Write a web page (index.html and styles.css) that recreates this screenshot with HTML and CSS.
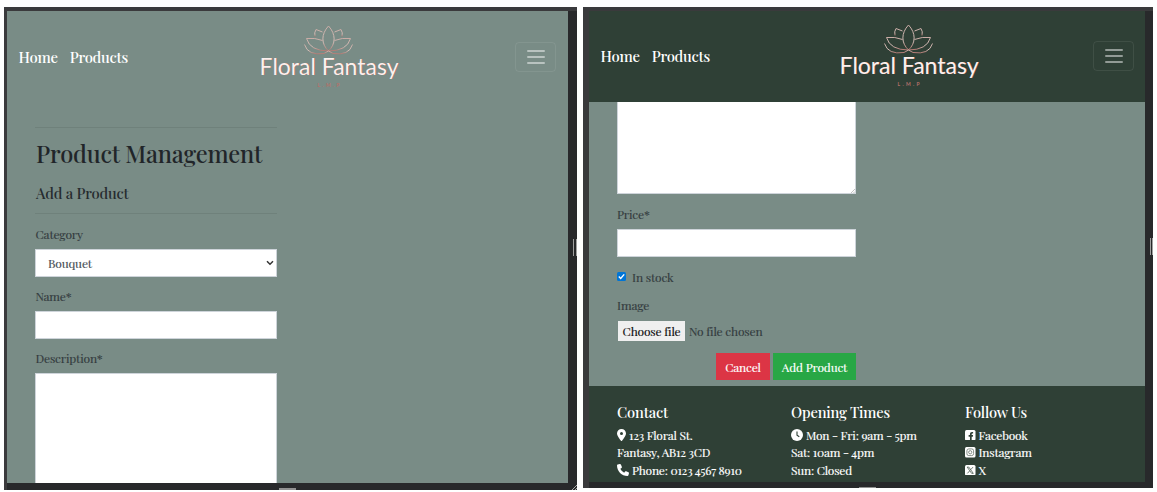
FILE: index.html
```
<!DOCTYPE html>
<html lang="en">
<head>
<meta charset="utf-8">
<title>Floral Fantasy - Product Management</title>
<link rel="stylesheet" href="styles.css">
</head>
<body>
<svg class="defs" aria-hidden="true">
  <defs>
    <linearGradient id="rose" x1="0" y1="0" x2="0" y2="1">
      <stop offset="0" stop-color="#c9aca6"/><stop offset=".65" stop-color="#d2bcb6"/><stop offset="1" stop-color="#b0756e"/>
    </linearGradient>
    <symbol id="logo" viewBox="0 0 144 70">
      <g fill="none" stroke="url(#rose)" stroke-width="1" stroke-linejoin="round">
        <path d="M70.500 3C63 11 63 21 70.500 28C78 21 78 11 70.500 3Z"/>
        <path d="M64.500 9L58 6.500Q56 9.500 57 13.500M76.500 9L83 6.500Q85 9.500 84 13.500"/>
        <path d="M64.500 17.500Q57 14.500 48.500 15.500Q52 28 70.500 28Q89 28 92.500 15.500Q84 14.500 76.500 17.500"/>
        <path d="M46.500 21.500Q50 33 66 30.500L70.500 28L75 30.500Q91 33 94.500 21.500"/>
      </g>
      <text class="logo-shadow" x="2" y="52.400" textLength="139" lengthAdjust="spacingAndGlyphs">Floral Fantasy</text>
      <text class="logo-name" x="1.600" y="52" textLength="139" lengthAdjust="spacingAndGlyphs">Floral Fantasy</text>
      <text class="logo-sub" x="59.500" y="64" textLength="22">L.M.P</text>
    </symbol>
  </defs>
</svg>

<section class="window window-left">
  <div class="screen">
    <header class="nav">
      <nav class="links"><a>Home</a><a>Products</a></nav>
      <svg class="logo"><use href="#logo"/></svg>
      <button class="toggler"><i></i><i></i><i></i></button>
    </header>
    <main class="form form-top">
      <hr>
      <h1>Product Management</h1>
      <h2>Add a Product</h2>
      <hr class="second">
      <label>Category</label>
      <div class="field select"><span>Bouquet</span>
        <svg width="8" height="6" viewBox="0 0 8 6"><path d="M1 1.300L4 4.300L7 1.300" fill="none" stroke="#333" stroke-width="1.500"/></svg>
      </div>
      <label>Name*</label>
      <div class="field"></div>
      <label>Description*</label>
      <div class="field area"></div>
    </main>
  </div>
  <span class="grip-v"></span>
  <span class="grip-h"></span>
  <svg class="corner" width="5" height="5" viewBox="0 0 5 5"><path d="M0 5L5 0M3 5L5 3" stroke="#aaa"/></svg>
</section>

<section class="window window-right">
  <div class="screen">
    <header class="nav dark">
      <nav class="links"><a>Home</a><a>Products</a></nav>
      <svg class="logo"><use href="#logo"/></svg>
      <button class="toggler"><i></i><i></i><i></i></button>
    </header>
    <main class="form form-bottom">
      <div class="area-end"><svg width="4" height="4" viewBox="0 0 4 4"><path d="M0 4L4 0M2.500 4L4 2.500" stroke="#999" stroke-width=".6"/></svg></div>
      <label>Price*</label>
      <div class="field"></div>
      <div class="check">
        <svg width="9" height="9" viewBox="0 0 9 9"><rect width="9" height="9" rx="1.500" fill="#0075d6"/><path d="M1.800 4.600L3.700 6.500L7.200 2.400" fill="none" stroke="#fff" stroke-width="1.400"/></svg>
        <span>In stock</span>
      </div>
      <label class="image-label">Image</label>
      <div class="file"><span class="choose">Choose file</span><span>No file chosen</span></div>
      <div class="actions"><a class="btn cancel">Cancel</a><a class="btn add">Add Product</a></div>
    </main>
    <footer>
      <div class="col">
        <h3>Contact</h3>
        <p><svg width="9" height="12" viewBox="0 0 384 512"><path fill="#fff" d="M215.700 499.200C267 435 384 279.400 384 192C384 86 298 0 192 0S0 86 0 192c0 87.400 117 243 168.300 307.200 12.300 15.300 35.100 15.300 47.400 0zM192 128a64 64 0 1 1 0 128 64 64 0 1 1 0-128z"/></svg><span>123 Floral St.</span></p>
        <p><span>Fantasy, AB12 3CD</span></p>
        <p><svg width="12" height="12" viewBox="0 0 512 512"><path fill="#fff" d="M164.900 24.600c-7.700-18.600-28-28.500-47.400-23.200l-88 24C12.100 30.200 0 46 0 64c0 247.400 200.600 448 448 448 18 0 33.800-12.100 38.600-29.500l24-88c5.300-19.400-4.600-39.700-23.200-47.400l-96-40c-16.300-6.800-35.200-2.100-46.300 11.600L304.700 368C234.300 334.700 177.300 277.700 144 207.300L193.300 167c13.700-11.200 18.400-30 11.600-46.300l-40-96z"/></svg><span>Phone: 0123 4567 8910</span></p>
      </div>
      <div class="col">
        <h3>Opening Times</h3>
        <p><svg width="12" height="12" viewBox="0 0 12 12"><circle cx="6" cy="6" r="6" fill="#fff"/><path d="M6 2.500V6.200L8.300 7.700" fill="none" stroke="#2f4036" stroke-width="1.100"/></svg><span>Mon - Fri: 9am - 5pm</span></p>
        <p><span>Sat: 10am - 4pm</span></p>
        <p><span>Sun: Closed</span></p>
      </div>
      <div class="col">
        <h3>Follow Us</h3>
        <p><svg width="10.500" height="10.500" viewBox="0 0 11 11"><rect width="11" height="11" rx="1.600" fill="#fff"/><path d="M5.200 11V7H3.800V5.200H5.200V4.200C5.200 2.700 6 2 7.300 2H8.500V3.600H7.800C7.200 3.600 7 3.900 7 4.400V5.200H8.500L8.200 7H7V11Z" fill="#2f4036"/></svg><span>Facebook</span></p>
        <p><svg width="10.500" height="10.500" viewBox="0 0 11 11"><rect width="11" height="11" rx="1.600" fill="#fff"/><g fill="none" stroke="#627068" stroke-width=".8"><rect x="2" y="2" width="7" height="7" rx="2"/><circle cx="5.500" cy="5.500" r="1.700"/></g></svg><span>Instagram</span></p>
        <p><svg width="10.500" height="10.500" viewBox="0 0 11 11"><rect width="11" height="11" rx="1.600" fill="#fff"/><path d="M2.300 2.200H4L8.700 8.800H7ZM8.400 2.200L6 4.900M5 6L2.500 8.800" fill="none" stroke="#46554c" stroke-width=".8"/></svg><span>X</span></p>
      </div>
    </footer>
  </div>
  <span class="grip-v"></span>
  <span class="grip-h"></span>
</section>
</body>
</html>
```
FILE: styles.css
```
* { box-sizing: border-box; }
body {
  margin: 0;
  width: 1157px;
  height: 492px;
  padding: 7px 4px 0;
  display: flex;
  align-items: flex-start;
  gap: 6px;
  overflow: hidden;
  background: #fff;
  color: #343c40;
  font: 12px/18px "Playfair Display", "Liberation Serif", serif;
  letter-spacing: -.17px;
  -webkit-text-stroke: .15px currentColor;
}
.defs { position: absolute; width: 0; height: 0; }
h1, h2, h3, p, hr { margin: 0; }

.window {
  position: relative;
  flex: none;
  overflow: hidden;
  background: #28292b;
  border-top: 4px solid #3a3a3c;
}
.window-left { width: 573px; height: 483px; border-left: 3px solid #3a3a3c; }
.window-right { width: 570px; height: 481px; border-left: 6px solid #3a3a3c; }
.screen { overflow: hidden; background: #798c86; }
.window-left .screen { width: 561px; height: 472px; }
.window-right .screen { width: 556px; height: 471px; }

.grip-v { position: absolute; top: 228px; right: 0; width: 4px; height: 17px; border: solid #a0a0a0; border-width: 0 1px; }
.window-right .grip-v { top: 227px; right: 0; width: 3px; }
.grip-h { position: absolute; bottom: 0; left: 272px; width: 17px; height: 2px; background: #929292; }
.window-right .grip-h { left: 270px; height: 1px; }
.corner { position: absolute; right: 0; bottom: 0; }

.nav {
  height: 91px;
  padding: 0 12px 0 11.500px;
  display: grid;
  grid-template-columns: 239px 144px 1fr;
  align-items: center;
}
.dark { background: #2f4036; grid-template-columns: 237px 144px 1fr; padding-right: 11px; }
.links { display: flex; gap: 12px; color: #fff; font-size: 14.9px; line-height: 20px; font-weight: 500; letter-spacing: -.27px; -webkit-text-stroke: 0; }
.dark .links { margin-top: -1px; }
.logo { width: 144px; height: 70px; margin-top: 3px; -webkit-text-stroke: 0; letter-spacing: 0; }
.window-right .logo { margin-top: 1px; }
.logo-name, .logo-shadow { font: 22.5px Lato, sans-serif; fill: #faf1ee; }
.logo-shadow { fill: #a4524e; }
.logo-sub { font: 700 5px Lato, sans-serif; fill: #b5706a; }
.window-left .logo-sub { fill: #9c4f4b; }
.toggler {
  justify-self: end;
  width: 41px;
  height: 30px;
  padding: 0;
  display: flex;
  flex-direction: column;
  align-items: center;
  justify-content: center;
  gap: 4px;
  background: none;
  border: 1px solid #ffffff14;
  border-radius: 4px;
}
.toggler i { width: 18px; height: 2px; border-radius: 1px; background: #ffffff7a; }
.window-left .toggler { margin-top: 1px; }
.window-right .toggler { margin-top: -1px; }

.form { display: flex; flex-direction: column; }
.form-top { width: 270px; padding: 25px 0 0 28px; }
.form-bottom { width: 267px; height: 284px; padding-left: 28px; }
hr { width: 100%; height: 1px; border: 0; background: #6f817b; }
h1 { margin-top: 9px; height: 32px; padding-left: 1px; color: #212529; font-weight: 500; font-size: 23.6px; line-height: 32px; letter-spacing: -.17px; white-space: nowrap; -webkit-text-stroke: 0; }
h2 { margin-top: 14px; height: 20px; padding-left: 1px; color: #262b2f; font-weight: 500; font-size: 14.8px; line-height: 20px; -webkit-text-stroke: 0; }
.second { margin: 10px 0 12px; }
label { height: 18px; margin-bottom: 5px; line-height: 17px; }
.form-top label { padding-left: .5px; }
.field { height: 28px; margin-bottom: 11px; background: #fff; border: 1px solid #ced4da; }
.select { display: flex; align-items: center; justify-content: space-between; padding: 0 2px 0 12px; color: #495057; }
.area { height: 125px; margin-bottom: 0; }

.area-end { height: 92px; margin-bottom: 12px; background: #fff; border: 1px solid #ced4da; border-top: 0; display: flex; align-items: flex-end; justify-content: flex-end; }
.check { display: flex; gap: 6px; height: 18px; }
.check svg { margin-top: 4px; }
.image-label { margin-top: 11px; }
.file { display: flex; align-items: center; height: 20px; gap: 4px; margin-top: 1px; }
.choose { width: 67px; height: 20px; margin-left: 1px; text-align: center; line-height: 20px; background: #efefef; color: #111; }
.actions { display: flex; justify-content: flex-end; gap: 3px; margin-top: 12px; color: #fff; }
.btn { height: 27px; line-height: 28px; text-align: center; }
.cancel { width: 54px; background: #dc3545; }
.add { width: 83px; background: #28a745; }

footer { height: 96px; padding: 15px 0 0 28px; display: grid; grid-template-columns: 174px 174px 1fr; background: #2f4036; color: #fff; }
h3 { height: 22px; margin-bottom: 3px; font-weight: 500; font-size: 14.7px; line-height: 22px; -webkit-text-stroke: 0; }
footer p { height: 17.500px; display: flex; align-items: center; gap: 3px; white-space: nowrap; letter-spacing: -.22px; }
footer p svg { flex: none; }
```
